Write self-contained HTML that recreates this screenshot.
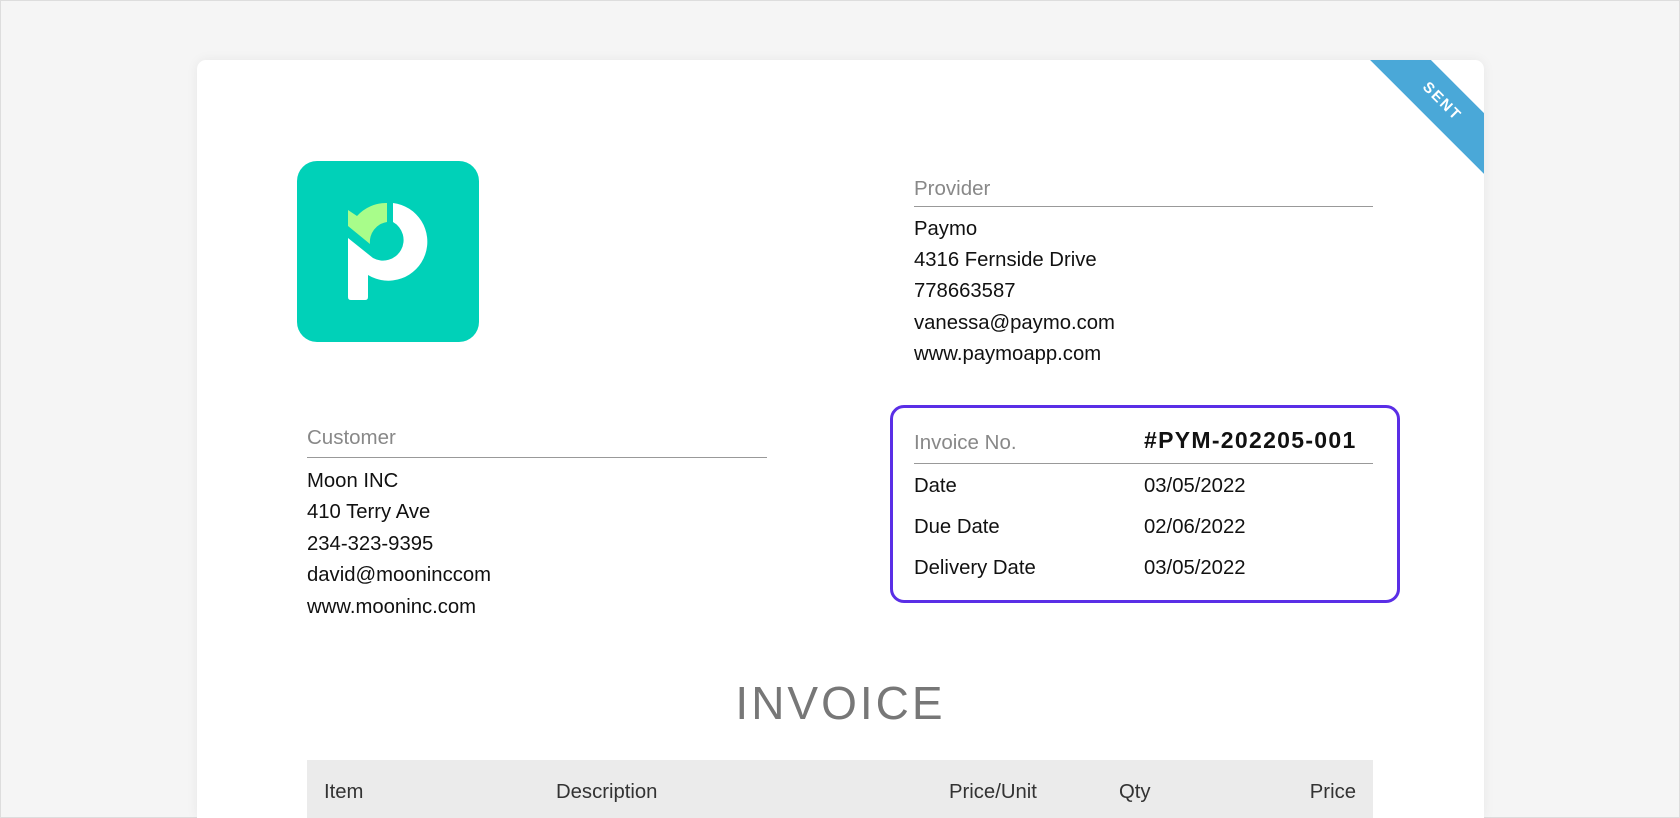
<!DOCTYPE html>
<html style="overflow:hidden;width:1680px;height:818px"><head><meta charset="utf-8"><style>
*{margin:0;padding:0;box-sizing:border-box}
html,body{overflow:hidden}
body{width:1680px;height:818px;background:#f5f5f5;font-family:"Liberation Sans",Arial,sans-serif;color:#111;position:relative;border:1px solid #ddd}
.card{position:absolute;left:196px;top:59px;width:1287px;height:758px;background:#fff;border-radius:9px 9px 0 0;box-shadow:0 0 12px rgba(0,0,0,0.06);overflow:hidden}
.a{position:absolute;white-space:nowrap}
.lbl{color:#888;font-size:20.5px}
.t{font-size:20.3px;color:#111}
.hr{position:absolute;height:1px;background:#999}
.ribbon{position:absolute;left:1145px;top:20px;width:200px;height:43px;background:#4aa8d8;transform:rotate(45deg);color:#fff;font-weight:bold;font-size:15px;letter-spacing:2px;text-align:center;line-height:43px}
.box{position:absolute;left:693px;top:345px;width:510px;height:198px;border:3px solid #5a2ee6;border-radius:14px}
.th{position:absolute;left:110px;top:700px;width:1066px;height:58px;background:#ebebeb}
</style></head><body>
<div class="card">
<div class="ribbon">SENT</div>
<svg class="a" style="left:100px;top:101px" width="182" height="181" viewBox="0 0 182 181">
<rect width="182" height="181" rx="20" fill="#00d1b8"/>
<path fill="#fff" d="M96,42 A39,39 0 1 1 71,114 L71,136 Q71,139 68,139 L54,139 Q51,139 51,136 L51,77 L76,97 A20,20 0 1 0 96,61 Z"/>
<path fill="#a8fd8a" d="M90,42 L90,61 A20,20 0 0 0 73,83 L51,65 L51,49 L60,55 A39,39 0 0 1 90,42 Z"/>
</svg>
<div class="a lbl" style="left:717px;top:117px">Provider</div>
<div class="hr" style="left:717px;top:146px;width:459px"></div>
<div class="a t" style="left:717px;top:158px">Paymo</div>
<div class="a t" style="left:717px;top:189px">4316 Fernside Drive</div>
<div class="a t" style="left:717px;top:220px">778663587</div>
<div class="a t" style="left:717px;top:252px">vanessa@paymo.com</div>
<div class="a t" style="left:717px;top:283px">www.paymoapp.com</div>
<div class="a lbl" style="left:110px;top:366px">Customer</div>
<div class="hr" style="left:110px;top:397px;width:460px"></div>
<div class="a t" style="left:110px;top:410px">Moon INC</div>
<div class="a t" style="left:110px;top:441px">410 Terry Ave</div>
<div class="a t" style="left:110px;top:473px">234-323-9395</div>
<div class="a t" style="left:110px;top:504px">david@mooninccom</div>
<div class="a t" style="left:110px;top:536px">www.mooninc.com</div>
<div class="box"></div>
<div class="a lbl" style="left:717px;top:371px">Invoice No.</div>
<div class="a" style="left:947px;top:367px;font-weight:bold;font-size:23px;letter-spacing:1.3px">#PYM-202205-001</div>
<div class="hr" style="left:717px;top:403px;width:459px"></div>
<div class="a t" style="left:717px;top:415px">Date</div>
<div class="a t" style="left:947px;top:415px">03/05/2022</div>
<div class="a t" style="left:717px;top:456px">Due Date</div>
<div class="a t" style="left:947px;top:456px">02/06/2022</div>
<div class="a t" style="left:717px;top:497px">Delivery Date</div>
<div class="a t" style="left:947px;top:497px">03/05/2022</div>
<div class="a" style="left:0;width:1287px;text-align:center;top:616px;font-size:46px;letter-spacing:3px;color:#777">INVOICE</div>
<div class="th"></div>
<div class="a t" style="left:127px;top:721px;color:#333">Item</div>
<div class="a t" style="left:359px;top:721px;color:#333">Description</div>
<div class="a t" style="left:752px;top:721px;color:#333">Price/Unit</div>
<div class="a t" style="left:922px;top:721px;color:#333">Qty</div>
<div class="a t" style="left:1100px;width:59px;text-align:right;top:721px;color:#333">Price</div>
</div>
</body></html>
